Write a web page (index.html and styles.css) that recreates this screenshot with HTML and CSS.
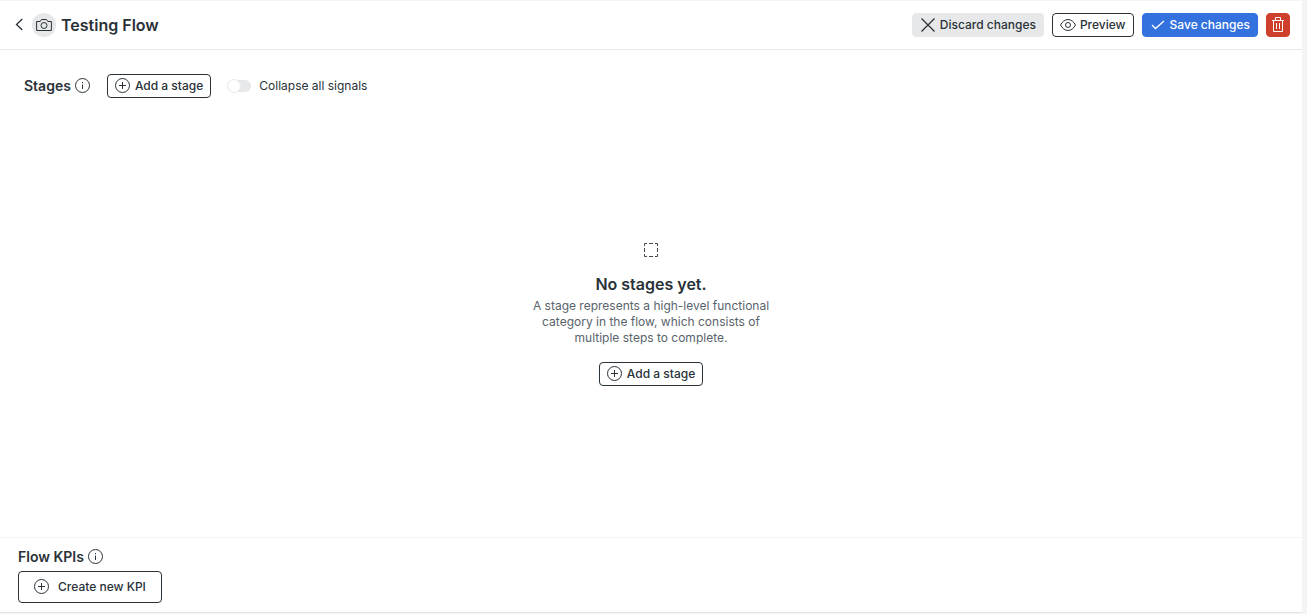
FILE: index.html
```html
<!DOCTYPE html>
<html lang="en">
<head>
<meta charset="utf-8">
<title>Testing Flow</title>
<link rel="stylesheet" href="styles.css">
</head>
<body>
<svg class="sprite" aria-hidden="true">
  <symbol id="plus" viewBox="0 0 16 16"><circle cx="7.500" cy="7.500" r="7"/><path d="M7.500 4v7M4 7.500h7"/></symbol>
  <symbol id="info" viewBox="0 0 16 16"><circle cx="7.500" cy="7.500" r="7"/><path d="M7.500 6.500V11M7.500 4v1.200"/></symbol>
</svg>
<div class="panel">
  <header class="topbar">
    <button class="icon-button back" type="button" aria-label="Back"><svg class="icon icon-bold" viewBox="0 0 16 16"><path d="M10.300 2 4.500 7.500l5.800 5.500"/></svg></button>
    <button class="icon-button avatar" type="button" aria-label="Change picture"><svg class="icon" viewBox="0 0 16 16"><path d="M.6 4.500h3.600L5.500 2.500h5L11.800 4.500h3.600v9H.6z"/><circle cx="8" cy="8.500" r="3"/></svg></button>
    <h1 class="title">Testing Flow</h1>
    <div class="actions">
      <button class="button button-muted" type="button"><svg class="icon icon-bold" viewBox="0 0 16 16"><path d="m1.500 1.500 13 13M14.500 1.500l-13 13"/></svg>Discard changes</button>
      <button class="button" type="button"><svg class="icon" viewBox="0 0 16 16"><path d="M.5 8C2.200 4.700 5 2.500 8 2.500S13.800 4.700 15.500 8C13.800 11.300 11 13.500 8 13.500S2.200 11.300.5 8z"/><circle cx="8" cy="8" r="2.500"/></svg>Preview</button>
      <button class="button button-primary" type="button"><svg class="icon icon-bold" viewBox="0 0 16 16"><path d="m2 8 3.500 3.500L14 4"/></svg>Save changes</button>
      <button class="button button-danger" type="button" aria-label="Delete flow"><svg class="icon" viewBox="0 0 16 16"><path d="M2 3.500h12M5.500 3.500v-3h5v3M3.500 3.500v11h9v-11M6.500 6v6M9.500 6v6"/></svg></button>
    </div>
  </header>
  <main class="stages">
    <div class="toolbar">
      <h2 class="heading">Stages <svg class="icon"><use href="#info"/></svg></h2>
      <button class="button" type="button"><svg class="icon"><use href="#plus"/></svg>Add a stage</button>
      <label class="toggle"><input class="switch" type="checkbox" role="switch">Collapse all signals</label>
    </div>
    <div class="empty">
      <svg class="icon empty-icon" viewBox="0 0 16 16"><path d="M1.500 4V1.500H4M6 1.500h4M12 1.500h2.500V4M14.500 6v4M14.500 12v2.500H12M10 14.500H6M4 14.500H1.500V12M1.500 10V6"/></svg>
      <h2 class="empty-title">No stages yet.</h2>
      <p class="empty-text">A stage represents a high-level functional category in the flow, which consists of multiple steps to complete.</p>
      <button class="button" type="button"><svg class="icon"><use href="#plus"/></svg>Add a stage</button>
    </div>
  </main>
  <footer class="kpis">
    <h2 class="heading">Flow KPIs <svg class="icon"><use href="#info"/></svg></h2>
    <button class="button button-large" type="button"><svg class="icon"><use href="#plus"/></svg>Create new KPI</button>
  </footer>
</div>
</body>
</html>
```
FILE: styles.css
```css
* { box-sizing: border-box; }
body {
  margin: 0;
  height: 100vh;
  padding: 1px 5px 1px 0;
  background: #f3f4f4;
  color: #293238;
  font: 12px/16px Inter, sans-serif;
}
h1, h2, p { margin: 0; }
.sprite { position: absolute; width: 0; height: 0; }
.panel {
  display: flex;
  flex-direction: column;
  height: 100%;
  background: #fff;
  border-bottom: 1px solid #e3e4e5;
}
.icon {
  flex: none;
  width: 16px;
  height: 16px;
  fill: none;
  stroke: currentColor;
  stroke-width: 1;
}
.icon-bold { stroke-width: 1.3; }
.topbar {
  display: flex;
  align-items: center;
  height: 49px;
  padding: 0 12px 0 8px;
  border-bottom: 1px solid #e7e8e9;
}
.icon-button {
  display: grid;
  place-items: center;
  width: 24px;
  height: 24px;
  padding: 0;
  border: 0;
  background: none;
  color: inherit;
}
.avatar { border-radius: 50%; background: #e7e8e9; }
.title { margin-left: 5px; font-size: 16px; line-height: 24px; font-weight: 600; }
.actions { display: flex; gap: 8px; margin-left: auto; }
.button {
  display: flex;
  align-items: center;
  gap: 4px;
  height: 24px;
  padding: 0 7px;
  border: 1px solid #293238;
  border-radius: 4px;
  background: #fff;
  color: #293238;
  font: 500 12px/16px Inter, sans-serif;
  white-space: nowrap;
}
.button-muted { border-color: #e7e8e9; background: #e7e8e9; }
.button-primary { border-color: #3372de; background: #3372de; color: #fff; }
.button-danger { padding: 0 3px; border-color: #ce3f2c; background: #ce3f2c; color: #fff; }
.button-large { height: 32px; padding: 0 15px; gap: 8px; }
.stages {
  display: flex;
  flex-direction: column;
  flex: 1;
  padding: 24px;
}
.toolbar { display: flex; align-items: center; gap: 16px; }
.heading {
  display: flex;
  align-items: center;
  gap: 4px;
  font-size: 14px;
  line-height: 20px;
  font-weight: 600;
}
.toggle { display: flex; align-items: center; gap: 8px; }
.switch {
  appearance: none;
  display: flex;
  align-items: center;
  width: 24px;
  height: 12px;
  margin: 0;
  border-radius: 6px;
  background: #e7e8e9;
}
.switch::before {
  content: "";
  width: 12px;
  height: 12px;
  border: 1px solid #e7e8e9;
  border-radius: 50%;
  background: #fff;
}
.switch:checked { justify-content: flex-end; background: #3372de; }
.empty {
  display: flex;
  flex: 1;
  flex-direction: column;
  align-items: center;
  justify-content: center;
  padding-top: 16px;
}
.empty-icon { color: #414b52; }
.empty-title { margin: 14px 0 2px; font-size: 16px; line-height: 24px; font-weight: 600; }
.empty-text { width: 240px; margin: 0 0 16px; color: #59636b; text-align: center; }
.kpis {
  display: flex;
  flex-direction: column;
  align-items: flex-start;
  gap: 4px;
  padding: 9px 18px;
  border-top: 1px solid #f3f4f4;
}
```
